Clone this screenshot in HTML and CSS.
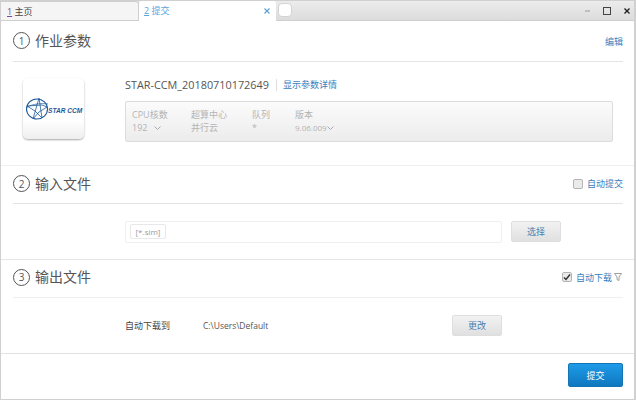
FILE: index.html
```html
<!DOCTYPE html>
<html lang="zh-CN">
<head>
  <meta charset="UTF-8">
  <title>提交</title>
  <link rel="stylesheet" href="styles.css">
</head>
<body>
  <div class="window">
    <!-- Tab bar -->
    <div class="titlebar">
      <div class="tab tab-home"><span class="tab-num">1</span> 主页</div>
      <div class="tab tab-active">
        <span><span class="tab-num">2</span> 提交</span>
        <svg class="tab-close" width="6" height="6" viewBox="0 0 6 6"><path d="M.5.5l5 5M5.5.5l-5 5" stroke="#5a9fd0" stroke-width="1.1"/></svg>
      </div>
      <div class="tab-new"></div>
      <div class="win-controls">
        <svg width="5" height="2" viewBox="0 0 5 2"><path d="M0 1h5" stroke="#999"/></svg>
        <svg width="8" height="8" viewBox="0 0 8 8"><rect x=".5" y=".5" width="7" height="7" fill="none" stroke="#444"/></svg>
        <svg width="6" height="6" viewBox="0 0 6 6"><path d="M.5.5l5 5M5.5.5l-5 5" stroke="#222" stroke-width="1.4"/></svg>
      </div>
    </div>

    <!-- Job parameters -->
    <div class="section section-params">
      <div class="section-head">
        <span class="step">1</span>
        <h2>作业参数</h2>
        <a class="head-link">编辑</a>
      </div>
      <div class="params-body">
        <div class="logo">
          <svg width="58" height="24" viewBox="0 0 58 24">
            <g fill="none" stroke="#1c5a9a">
              <ellipse cx="12" cy="12" rx="10.5" ry="10" stroke-width="1.1"/>
              <path d="M2 10C8 7 16 6 23 7" stroke-width=".7"/>
              <path d="M14 1l3 20-7-7-8-5 15-1 5 2-8 5-6 7z" stroke-width=".8"/>
            </g>
            <text x="23" y="16" class="logo-text">STAR CCM</text>
          </svg>
        </div>
        <div class="job">
          <div class="job-title">
            <span class="job-name">STAR-CCM_20180710172649</span>
            <a class="job-detail">显示参数详情</a>
          </div>
          <div class="job-panel">
            <div class="field field-cpu">
              <span>CPU核数</span>
              <span>192 <svg class="chev chev-cpu" width="7" height="4" viewBox="0 0 7 4"><path d="M.5.5l3 3 3-3" fill="none" stroke="#aaa"/></svg></span>
            </div>
            <div class="field field-center"><span>超算中心</span><span>并行云</span></div>
            <div class="field field-queue"><span>队列</span><span>*</span></div>
            <div class="field">
              <span>版本</span>
              <span class="version">9.06.009<svg class="chev" width="7" height="4" viewBox="0 0 7 4"><path d="M.5.5l3 3 3-3" fill="none" stroke="#aaa"/></svg></span>
            </div>
          </div>
        </div>
      </div>
    </div>

    <!-- Input files -->
    <div class="section section-input">
      <div class="section-head">
        <span class="step">2</span>
        <h2>输入文件</h2>
        <label class="head-check"><span class="checkbox"></span><a class="head-link">自动提交</a></label>
      </div>
      <div class="row">
        <div class="file-box"><span class="file-tag">[*.sim]</span></div>
        <button class="btn">选择</button>
      </div>
    </div>

    <!-- Output files -->
    <div class="section section-output">
      <div class="section-head">
        <span class="step">3</span>
        <h2>输出文件</h2>
        <label class="head-check">
          <span class="checkbox checked"><svg width="8" height="8" viewBox="0 0 8 8"><path d="M1 4.5l2 2 4-5" fill="none" stroke="#333" stroke-width="1.5"/></svg></span>
          <a class="head-link">自动下载</a>
          <svg class="filter" width="8" height="9" viewBox="0 0 8 9"><path d="M.5.5h7L5 4v3.5L3 6.5V4z" fill="none" stroke="#888" stroke-width=".8"/></svg>
        </label>
      </div>
      <div class="row row-output">
        <span class="out-label">自动下载到</span>
        <span class="out-path">C:\Users\Default</span>
        <button class="btn">更改</button>
      </div>
    </div>

    <div class="footer">
      <button class="btn-submit">提交</button>
    </div>
  </div>
</body>
</html>
```

FILE: styles.css
```css
* {
  box-sizing: border-box;
}
body {
  margin: 0;
  font-family: "Open Sans", "Noto Sans CJK SC", sans-serif;
  font-size: 9px;
  color: #444;
  background: #fff;
}
.window {
  width: 636px;
  height: 400px;
  border: 1px solid #d0d0d0;
  border-width: 1px 2px 1px 1px;
  display: flex;
  flex-direction: column;
  background: #fff;
}

/* tabs */
.titlebar {
  height: 20px;
  flex: none;
  display: flex;
  align-items: flex-end;
  background: linear-gradient(#ececec, #dcdcdc);
  border-bottom: 1px solid #cfcfcf;
}
.tab {
  height: 19px;
  width: 138px;
  padding: 0 6px;
  display: flex;
  align-items: center;
  white-space: pre;
  color: #444;
  background: #f5f5f5;
  border: 1px solid #cfcfcf;
  border-bottom: none;
  border-left: none;
  border-radius: 0 3px 0 0;
}
.tab-num {
  text-decoration: underline;
  color: #7a4aa0;
}
.tab-active {
  width: 137px;
  height: 20px;
  margin-bottom: -1px;
  padding: 0 6px 1px 5px;
  justify-content: space-between;
  color: #5aa5dc;
  background: #fff;
  border: none;
  border-radius: 3px 3px 0 0;
}
.tab-active .tab-num {
  color: #5aa5dc;
}
.tab-new {
  width: 14px;
  height: 14px;
  margin: 0 0 3px 2px;
  background: #fff;
  border: 1px solid #d4d4d4;
  border-radius: 4px;
}
.win-controls {
  margin-left: auto;
  height: 19px;
  padding-right: 4px;
  display: flex;
  align-items: center;
  gap: 13px;
}

/* sections */
.section {
  padding: 0 11px 0 12px;
  border-bottom: 1px solid #f0f0f0;
}
.section-params {
  height: 145px;
}
.section-input {
  height: 94px;
  border-bottom-color: #e6e6e6;
}
.section-output {
  height: 94px;
  border-bottom-color: #e2e2e2;
}
.section-head {
  height: 38px;
  padding-bottom: 2px;
  display: flex;
  align-items: center;
  border-bottom: 1px solid #e4e4e4;
}
.section-params .section-head {
  height: 41px;
  padding-bottom: 1px;
}
.section-output .section-head {
  padding-bottom: 3px;
  border-bottom-color: #efefef;
}
.step {
  width: 17px;
  height: 17px;
  flex: none;
  display: flex;
  align-items: center;
  justify-content: center;
  font-size: 10px;
  color: #555;
  border: 1px solid #555;
  border-radius: 50%;
}
h2 {
  margin: 0 0 2px 5px;
  font-size: 14px;
  font-weight: 400;
  color: #555;
}
.head-link {
  color: #3a80c0;
}
.section-head > .head-link {
  margin-left: auto;
  margin-top: 1px;
}
.head-check {
  margin-left: auto;
  display: flex;
  align-items: center;
  gap: 4px;
}
.checkbox {
  width: 10px;
  height: 10px;
  display: flex;
  align-items: center;
  justify-content: center;
  background: #eaeaea;
  border: 1px solid #b4b4b4;
  border-radius: 2px;
}
.filter {
  margin-left: -2px;
  margin-right: 1px;
}

/* job params */
.params-body {
  padding-top: 16px;
  display: flex;
}
.logo {
  width: 61px;
  height: 61px;
  margin-left: 10px;
  display: flex;
  align-items: center;
  justify-content: center;
  background: linear-gradient(#ffffff 70%, #eeeeee);
  border-radius: 5px;
  box-shadow: 0 1px 2px rgba(0, 0, 0, 0.35);
}
.logo-text {
  font-family: "Liberation Sans", sans-serif;
  font-size: 6.6px;
  font-weight: 700;
  font-style: italic;
  fill: #1c5a9a;
}
.job {
  width: 488px;
  margin-left: 41px;
}
.job-title {
  height: 23px;
  padding-bottom: 10px;
  display: flex;
  align-items: center;
}
.job-name {
  width: 144px;
  white-space: nowrap;
  font-size: 10.85px;
  color: #555;
}
.job-detail {
  margin-left: 7px;
  padding-left: 6px;
  color: #3a80c0;
  border-left: 1px solid #ddd;
  line-height: 12px;
}
.job-panel {
  height: 41px;
  padding: 6px 0 0 6px;
  display: flex;
  color: #b4b4b4;
  background: linear-gradient(#fbfbfb, #ececec);
  border: 1px solid #dcdcdc;
  border-radius: 2px;
}
.field {
  display: flex;
  flex-direction: column;
  line-height: 13px;
}
.field-cpu {
  width: 59px;
}
.field-center {
  width: 61px;
}
.field-queue {
  width: 43px;
}
.chev {
  vertical-align: 1px;
}
.chev-cpu {
  margin-left: 4px;
}
.version {
  font-size: 8px;
}

/* rows */
.row {
  height: 55px;
  padding: 0 62px 0 112px;
  display: flex;
  align-items: center;
}
.file-box {
  width: 377px;
  height: 22px;
  padding-left: 4px;
  display: flex;
  align-items: center;
  background: #fff;
  border: 1px solid #f0f0f0;
  border-radius: 2px;
}
.file-tag {
  width: 36px;
  height: 15px;
  line-height: 13px;
  text-align: center;
  font-size: 8px;
  color: #999;
  border: 1px solid #e8e8e8;
  border-radius: 2px;
}
.btn {
  width: 50px;
  height: 21px;
  margin-left: 9px;
  padding: 0;
  font: inherit;
  color: #4a7fb0;
  background: linear-gradient(#f2f2f2, #e0e0e0);
  border: 1px solid #dedede;
  border-radius: 2px;
}
.out-label {
  width: 78px;
  color: #444;
}
.out-path {
  width: 249px;
  font-size: 8.5px;
  color: #555;
}
.row-output .btn {
  margin-left: 0;
}

.footer {
  flex: 1;
  padding: 9px 11px 0 0;
  display: flex;
  justify-content: flex-end;
  align-items: flex-start;
}
.btn-submit {
  width: 55px;
  height: 24px;
  font: inherit;
  color: #fff;
  background: linear-gradient(#1e9be8, #0f78bf);
  border: 1px solid #1474b4;
  border-radius: 2px;
}
```
